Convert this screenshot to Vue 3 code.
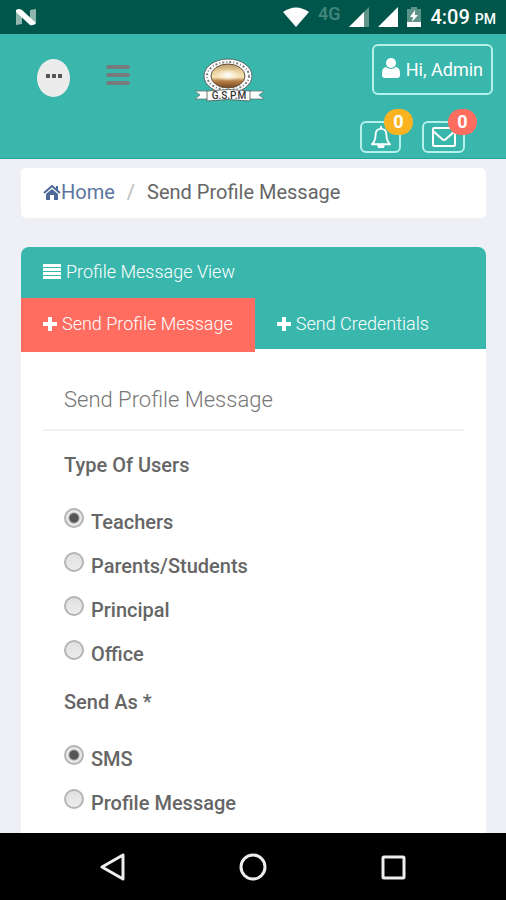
<script setup>
import { ref } from 'vue'

const userTypes = ['Teachers', 'Parents/Students', 'Principal', 'Office']
const sendModes = ['SMS', 'Profile Message']
const tabs = ['Send Profile Message', 'Send Credentials']

const userType = ref('Teachers')
const sendMode = ref('SMS')
const activeTab = ref('Send Profile Message')
</script>

<template>
  <div class="screen">
    <div class="status-bar">
      <svg class="system-logo" width="22" height="18" viewBox="0 0 22 18">
        <path d="M1 3l6-1v14l-6 1z" fill="#8fb5ac" />
        <path d="M15 2l6-1v14l-6 1z" fill="#8fb5ac" />
        <path d="M1 2q3-2 6 0l14 13q-2 3-6 2L1 4z" fill="#fff" />
      </svg>
      <div class="status-icons">
        <svg width="26" height="20" viewBox="0 0 26 20">
          <path d="M0 5Q13-4 26 5L13 20z" fill="#fff" />
        </svg>
        <span class="network">4G</span>
        <svg width="20" height="20" viewBox="0 0 20 20">
          <path d="M0 20L20 0v20z" fill="#5e9389" />
          <path d="M0 20L15 5v15z" fill="#fff" />
        </svg>
        <svg width="20" height="20" viewBox="0 0 20 20">
          <path d="M0 20L20 0v20z" fill="#fff" />
        </svg>
        <svg width="14" height="20" viewBox="0 0 14 20">
          <path d="M0 2h4V0h6v2h4v13H0z" fill="#5e9389" />
          <path d="M0 15h14v5H0zM8 3L3 10h3l-1 5 6-7H8z" fill="#fff" />
        </svg>
        <span class="clock">4:09 <small>PM</small></span>
      </div>
    </div>

    <header class="header">
      <div class="header-left">
        <button class="more" type="button" aria-label="More">
          <svg width="16" height="4" viewBox="0 0 16 4">
            <path d="M0 0h4v4H0zM6 0h4v4H6zM12 0h4v4h-4z" fill="#555" />
          </svg>
        </button>
        <button class="menu" type="button" aria-label="Menu">
          <svg width="24" height="22" viewBox="0 0 24 22">
            <path d="M2 3h20M2 11h20M2 19h20" stroke="#777b7d" stroke-width="4" stroke-linecap="round" />
          </svg>
        </button>
        <svg class="logo" width="70" height="46" viewBox="0 0 70 46">
          <defs>
            <linearGradient id="sun" x1="0" y1="0" x2="0" y2="1">
              <stop offset="0" stop-color="#b99a68" />
              <stop offset="0.3" stop-color="#e9d09a" />
              <stop offset="0.55" stop-color="#f6e3b5" />
              <stop offset="0.7" stop-color="#b98247" />
              <stop offset="1" stop-color="#734522" />
            </linearGradient>
            <radialGradient id="glow">
              <stop offset="0" stop-color="#fff" />
              <stop offset="1" stop-color="#fff" stop-opacity="0" />
            </radialGradient>
          </defs>
          <ellipse cx="33" cy="19" rx="24" ry="17" fill="#fff" stroke="#5d6666" />
          <ellipse cx="33" cy="19" rx="21" ry="14" fill="none" stroke="#7b8280" stroke-width="2" stroke-dasharray="2 2 1 2" />
          <ellipse cx="33" cy="19" rx="17" ry="12" fill="url(#sun)" stroke="#5d513d" />
          <ellipse cx="33" cy="18" rx="12" ry="6" fill="url(#glow)" />
          <path d="M0 34h15v8H0l5-4zM69 34H54v8h15l-5-4z" fill="#fff" stroke="#59716d" stroke-width=".7" />
          <path d="M12 34q21-3 43 0v10q-22-3-43 0z" fill="#fff" stroke="#4c5a57" stroke-width=".8" />
          <text x="34" y="42" class="logo-text" text-anchor="middle">G.S.P.M</text>
        </svg>
      </div>
      <div class="header-right">
        <button class="user" type="button">
          <svg width="18" height="20" viewBox="0 0 18 20">
            <circle cx="9" cy="5" r="5" fill="#fff" />
            <path d="M4 9q5 4 10 0 4 1 4 6v2q0 3-3 3H3q-3 0-3-3v-2q0-5 4-6z" fill="#fff" />
          </svg>
          Hi, Admin
        </button>
        <div class="alerts">
          <button class="alert bell" type="button" aria-label="Notifications">
            <svg width="20" height="22" viewBox="0 0 22 24">
              <path d="M11 3C6 3 5 7 5 10c0 5-1 7-4 10h20c-3-3-4-5-4-10 0-3-1-7-6-7z" fill="none" stroke="#fff" stroke-width="2" stroke-linejoin="round" />
              <path d="M11 0v3M8 21a3 3 0 0 0 6 0z" fill="#fff" stroke="#fff" stroke-width="2" />
            </svg>
            <span class="badge badge-yellow">0</span>
          </button>
          <button class="alert" type="button" aria-label="Messages">
            <svg width="24" height="20" viewBox="0 0 24 20">
              <rect x="1" y="1" width="22" height="18" rx="1" fill="none" stroke="#fff" stroke-width="2" />
              <path d="M1 4l9 8q2 2 4 0l9-8" fill="none" stroke="#fff" stroke-width="2" />
            </svg>
            <span class="badge badge-red">0</span>
          </button>
        </div>
      </div>
    </header>

    <main class="content">
      <nav class="breadcrumb">
        <a href="#">
          <svg width="18" height="15" viewBox="0 0 18 15">
            <path d="M9 4l6 5v6h-4v-5H7v5H3V9z" fill="#4b6a96" />
            <path d="M1 8l8-7 8 7M14 1v4" fill="none" stroke="#4b6a96" stroke-width="2" />
          </svg>Home</a>
        <span class="slash">/</span>
        <span>Send Profile Message</span>
      </nav>

      <section class="panel">
        <div class="panel-head">
          <svg width="18" height="15" viewBox="0 0 18 15">
            <path d="M0 0h18v3H0zM0 4h18v3H0zM0 8h18v3H0zM0 12h18v3H0z" fill="#fff" />
          </svg>
          Profile Message View
        </div>
        <div class="tabs">
          <button
            v-for="tab in tabs"
            :key="tab"
            type="button"
            class="tab"
            :class="{ active: tab === activeTab }"
            @click="activeTab = tab"
          >
            <svg width="14" height="14" viewBox="0 0 14 14">
              <path d="M5 0h4v5h5v4H9v5H5V9H0V5h5z" fill="#fff" />
            </svg>
            {{ tab }}
          </button>
        </div>

        <form class="form">
          <h2 class="form-title">Send Profile Message</h2>
          <fieldset>
            <legend>Type Of Users</legend>
            <label v-for="item in userTypes" :key="item" class="option">
              <input v-model="userType" type="radio" name="userType" :value="item">
              {{ item }}
            </label>
          </fieldset>
          <fieldset>
            <legend>Send As *</legend>
            <label v-for="item in sendModes" :key="item" class="option">
              <input v-model="sendMode" type="radio" name="sendMode" :value="item">
              {{ item }}
            </label>
          </fieldset>
        </form>
      </section>
    </main>

    <div class="system-nav">
      <button type="button" aria-label="Back">
        <svg width="28" height="28" viewBox="0 0 28 28">
          <path d="M24 2v24L3 14z" fill="none" stroke="#eee" stroke-width="3" stroke-linejoin="round" />
        </svg>
      </button>
      <button type="button" aria-label="Home">
        <svg width="28" height="28" viewBox="0 0 28 28">
          <circle cx="14" cy="14" r="12" fill="none" stroke="#eee" stroke-width="3" />
        </svg>
      </button>
      <button type="button" aria-label="Recent apps">
        <svg width="28" height="28" viewBox="0 0 28 28">
          <rect x="4" y="4" width="21" height="21" rx="1" fill="none" stroke="#eee" stroke-width="3" />
        </svg>
      </button>
    </div>
  </div>
</template>

<style>
body {
  margin: 0;
  background: #eff0f5;
}
</style>

<style scoped>
.screen {
  display: flex;
  flex-direction: column;
  min-height: 100vh;
  background: #eff0f5;
  font-family: Roboto, "Liberation Sans", sans-serif;
  color: #666;
}

svg {
  display: block;
  flex-shrink: 0;
}

button {
  padding: 0;
  border: 0;
  background: none;
  color: inherit;
  font: inherit;
  cursor: pointer;
}

/* status bar */
.status-bar {
  display: flex;
  justify-content: space-between;
  align-items: center;
  height: 34px;
  padding: 0 10px 0 15px;
  background: #00564b;
  color: #fff;
}

.status-icons {
  display: flex;
  align-items: center;
  gap: 9px;
}

.network {
  padding-bottom: 8px;
  color: #44877d;
  font-size: 18px;
  font-weight: 500;
}

.clock {
  font-size: 20px;
  font-weight: 500;
}

.clock small {
  font-size: 14px;
}

/* header */
.header {
  display: flex;
  justify-content: space-between;
  padding: 10px 13px 5px 37px;
  border-bottom: 1px solid #1fa79b;
  background: #3ab7ad;
}

.header-left {
  display: flex;
  align-items: flex-start;
  padding-top: 13px;
}

.more {
  display: flex;
  justify-content: center;
  align-items: center;
  width: 33px;
  height: 38px;
  margin: 2px 36px 0 0;
  padding-bottom: 4px;
  border-radius: 50%;
  background: #ececec;
}

.menu {
  margin: 7px 65px 0 0;
}

.logo-text {
  fill: #333;
  font-size: 10px;
  font-weight: 500;
}

.header-right {
  display: flex;
  flex-direction: column;
  align-items: flex-end;
  gap: 26px;
}

.user {
  display: flex;
  align-items: center;
  gap: 6px;
  height: 51px;
  padding: 0 8px;
  border: 2px solid #b5f0ea;
  border-radius: 6px;
  color: #fff;
  font-size: 18px;
}

.user svg {
  margin-bottom: 4px;
}

.alerts {
  display: flex;
  gap: 21px;
  margin-right: 28px;
}

.alert {
  position: relative;
  display: flex;
  justify-content: center;
  align-items: center;
  width: 43px;
  height: 32px;
  border: 2px solid #b5f0ea;
  border-radius: 6px;
}

.alert.bell {
  width: 41px;
}

.badge {
  position: absolute;
  top: -14px;
  right: -14px;
  width: 29px;
  border-radius: 13px;
  color: #fff;
  font-size: 18px;
  font-weight: 700;
  line-height: 26px;
  text-align: center;
}

.badge-yellow {
  background: #fcb322;
}

.badge-red {
  background: #ff6c60;
}

/* content */
.content {
  display: flex;
  flex: 1;
  flex-direction: column;
  gap: 29px;
  padding: 9px 20px 0 21px;
}

.breadcrumb {
  display: flex;
  align-items: center;
  box-sizing: border-box;
  height: 50px;
  padding: 0 22px 2px;
  border-radius: 5px;
  background: #fff;
  font-size: 20px;
}

.breadcrumb a {
  display: flex;
  align-items: center;
  color: #5a76a0;
  text-decoration: none;
}

.slash {
  padding: 0 12px;
  color: #bbb;
}

.panel {
  flex: 1;
  overflow: hidden;
  border-radius: 8px 8px 0 0;
  background: #fff;
}

.panel-head {
  display: flex;
  align-items: center;
  gap: 5px;
  box-sizing: border-box;
  height: 51px;
  padding: 0 22px 2px;
  background: #3ab7ad;
  color: #fff;
  font-size: 18px;
  font-weight: 300;
}

.tabs {
  display: flex;
  height: 51px;
  background: #3ab7ad;
}

.tab {
  display: flex;
  align-items: center;
  gap: 5px;
  height: 51px;
  padding: 0 22px;
  color: #fff;
  font-size: 18px;
  font-weight: 300;
}

.tab.active {
  height: 54px;
  padding-bottom: 3px;
  background: #ff6c60;
}

/* form */
.form {
  padding: 29px 22px 0;
}

.form-title {
  margin: 0 0 12px;
  padding: 0 21px 8px;
  border-bottom: 2px solid #eff0f3;
  color: #777;
  font-size: 22px;
  font-weight: 300;
  line-height: 43px;
}

fieldset {
  margin: 0;
  padding: 0 21px 4px;
  border: 0;
}

legend {
  padding: 0 0 13px;
  font-size: 20px;
  font-weight: 500;
  line-height: 44px;
}

.option {
  display: flex;
  align-items: center;
  gap: 7px;
  height: 44px;
  font-size: 20px;
  font-weight: 500;
}

.option input {
  appearance: none;
  width: 20px;
  height: 20px;
  margin: 0 0 8px;
  border: 2px solid #b4b4b4;
  border-radius: 50%;
  background: linear-gradient(#e0e0e0, #ececec);
}

.option input:checked {
  background: radial-gradient(circle, #555 4px, #e8e8e8 6px);
}

/* navigation keys */
.system-nav {
  display: flex;
  justify-content: center;
  align-items: center;
  gap: 112px;
  height: 67px;
  background: #000;
}
</style>
